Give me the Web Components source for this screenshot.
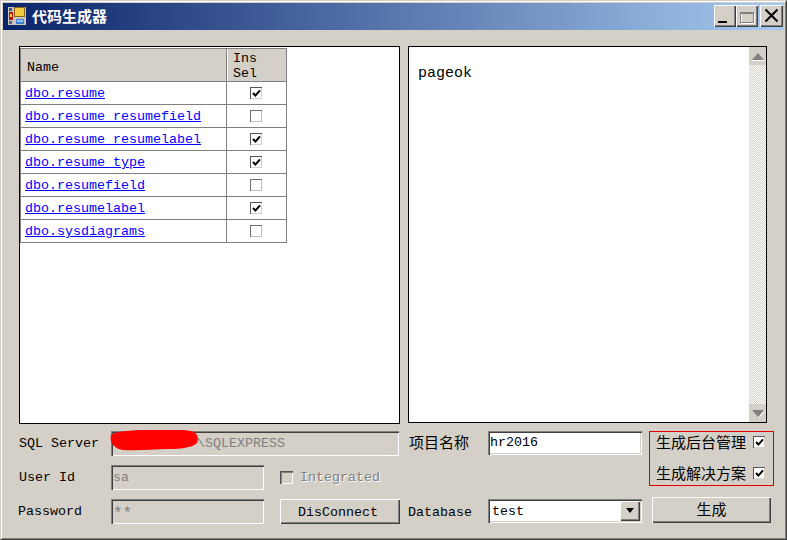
<!DOCTYPE html>
<html lang="zh"><head><meta charset="utf-8">
<style>
html,body{margin:0;padding:0;background:#d4d0c8}
body{width:787px;height:540px;overflow:hidden;font:13.33px "Liberation Mono","Noto Sans CJK SC",monospace;color:#000}
</style></head><body>
<win-frame caption="代码生成器">
  <main-panes>
    <table-list slot="left"></table-list>
    <text-log slot="right">pageok</text-log>
  </main-panes>
  <form-grid>
    <win-label style="grid-area:1/1">SQL Server</win-label>
    <sunken-field disabled value="\SQLEXPRESS" style="grid-area:1/2/1/5;padding-left:84px;margin-right:1px" mask></sunken-field>
    <win-label style="grid-area:2/1">User Id</win-label>
    <sunken-field disabled value="sa" style="grid-area:2/2"></sunken-field>
    <win-label style="grid-area:3/1;margin-left:-1px">Password</win-label>
    <sunken-field stars disabled value="**" style="grid-area:3/2"></sunken-field>
    <check-label disabled style="grid-area:2/4;align-self:center">Integrated</check-label>
    <win-button style="grid-area:3/4;padding:1px 4px 0 0">DisConnect</win-button>
    <win-label cjk style="grid-area:1/6;margin-left:1px;margin-top:-4px">项目名称</win-label>
    <sunken-field live value="hr2016" style="grid-area:1/7;height:24px;padding-bottom:2px"></sunken-field>
    <win-label style="grid-area:3/6;padding-top:1px">Database</win-label>
    <combo-box value="test" style="grid-area:3/7"></combo-box>
    <check-group style="grid-area:1/9/3/9">
      <group-check>生成后台管理</group-check>
      <group-check>生成解决方案</group-check>
    </check-group>
    <win-button cjk style="grid-area:3/9;margin:-2px 3px 1px 3px;padding-bottom:3px">生成</win-button>
  </form-grid>
</win-frame>
<script>
const el=(name,html,extra)=>customElements.define(name,class extends HTMLElement{
  constructor(){super();this.attachShadow({mode:'open'}).innerHTML=typeof html==='function'?html(this):html}
  connectedCallback(){if(extra)extra(this)}
});
const FONT='"Liberation Mono","Noto Sans CJK SC",monospace';
const CJK='"Noto Sans CJK SC","Liberation Mono",sans-serif';
const TICK='<svg width="9" height="9" viewBox="0 0 9 9" style="display:block"><path d="M1 4l2.4 2.6L8 1.4" fill="none" stroke="#000" stroke-width="2"/></svg>';

customElements.define('win-frame',class extends HTMLElement{
  connectedCallback(){
    if(this.shadowRoot)return;
    const c=this.getAttribute('caption');
    this.attachShadow({mode:'open'}).innerHTML=`<style>
    :host{display:block;box-sizing:border-box;width:787px;height:540px;background:#d4d0c8;border:1px solid;border-color:#d4d0c8 #404040 #404040 #d4d0c8}
    .in{box-sizing:border-box;height:100%;border:1px solid;border-color:#fff #808080 #808080 #fff;padding:1px;display:flex;flex-direction:column}
    .bar{height:27px;flex:none;display:flex;align-items:center;background:linear-gradient(90deg,#0a246a,#a6caf0);padding:0 1px 1px 5px;box-sizing:border-box}
    .t{color:#fff;font:bold 15px/20px ${CJK};margin-left:6px;margin-top:-1px}
    .ic{flex:none;display:block}
    .b{box-sizing:border-box;width:22px;height:22px;background:#d4d0c8;box-shadow:inset 1px 1px #fff,inset -1px -1px #404040,inset -2px -2px #808080;display:flex;align-items:center;justify-content:center;flex:none}
    .b svg{display:block}
    .min{margin-left:auto}.cl{margin-left:2px;width:23px}
    .body{flex:1;padding:16px 0 0 16px;display:flex;flex-direction:column;gap:7px}
    </style><div class="in"><div class="bar">
    <svg class="ic" width="18" height="18" viewBox="0 0 18 18"><rect width="18" height="18" fill="#c9c7c0"/><rect x="1" y="1" width="3" height="3" fill="#3d5a78"/><rect x="1" y="5" width="4" height="8" fill="#b8140c"/><rect x="2" y="7" width="2" height="3" fill="#f5d040"/><rect x="1" y="14" width="3" height="3" fill="#5a6a80"/><rect x="6" y="0" width="11" height="10" fill="#8a6414"/><rect x="7" y="1" width="9" height="8" fill="#f6c840"/><rect x="8" y="12" width="8" height="5" fill="#3f7ed8"/><rect x="9" y="13" width="6" height="2" fill="#9cc4f2"/></svg>
    <span class="t">${c}</span>
    <div class="b min"><svg width="22" height="22"><rect x="4" y="16" width="9" height="2" fill="#000"/></svg></div>
    <div class="b max"><svg width="22" height="22"><path d="M5.5 8.5h13v10h-13z" fill="none" stroke="#fff"/><path d="M4.5 7.5h13v10h-13zM4.5 8.5h13" fill="none" stroke="#808080"/></svg></div>
    <div class="b cl"><svg width="23" height="22"><path d="M5.5 4.5l12 12M17.5 4.5l-12 12" stroke="#000" stroke-width="2" fill="none"/></svg></div>
    </div><div class="body"><slot></slot></div></div>`;
  }
});

el('main-panes',`<style>:host{display:flex;gap:8px;height:378px;flex:none}
::slotted(*){flex:none}</style><slot name="left"></slot><slot name="right"></slot>`);

el('table-list',h=>`<style>
:host{display:block;box-sizing:border-box;width:381px;height:378px;background:#fff;border:1px solid #000;padding-top:1px;font:13.33px ${FONT}}
.t{display:grid;grid-template-columns:206px 60px;width:267px;border-top:1px solid #808080;border-left:1px solid #808080;box-sizing:border-box}
</style><div class="t" id="t"></div>`,h=>{
  const t=h.shadowRoot.getElementById('t');
  if(t.childElementCount)return;
  const rows=[['dbo.resume',1],['dbo.resume_resumefield',0],['dbo.resume_resumelabel',1],['dbo.resume_type',1],['dbo.resumefield',0],['dbo.resumelabel',1],['dbo.sysdiagrams',0]];
  t.innerHTML='<grid-head>Name</grid-head><grid-head two>Ins<br>Sel</grid-head>'+rows.map(r=>`<link-cell>${r[0]}</link-cell><tick-cell${r[1]?' checked':''}></tick-cell>`).join('');
});

el('grid-head',`<style>:host{display:flex;align-items:center;box-sizing:border-box;height:33px;background:#d4d0c8;border-right:1px solid #808080;border-bottom:1px solid #808080;padding:5px 0 0 6px;line-height:15px}
:host([two]){padding:1px 0 0 6px;box-shadow:inset 1px 0 #fff}</style><div><slot></slot></div>`);

el('link-cell',`<style>:host{display:flex;align-items:center;box-sizing:border-box;height:23px;background:#fff;border-right:1px solid #808080;border-bottom:1px solid #808080;padding:1px 0 0 4px;color:#00f;text-decoration:underline;white-space:nowrap}</style><slot></slot>`);

el('tick-cell',h=>`<style>:host{display:flex;align-items:center;justify-content:center;box-sizing:border-box;height:23px;background:#fff;border-right:1px solid #808080;border-bottom:1px solid #808080;padding-right:1px}</style><check-box ${h.hasAttribute('checked')?'checked':'light'}></check-box>`);

el('check-box',h=>`<style>:host{display:flex;align-items:center;justify-content:center;box-sizing:border-box;width:12px;height:12px;background:#fff;flex:none;box-shadow:inset 1px 1px #555,inset -1px -1px #d4d0c8}
:host([light]){box-shadow:inset 1px 1px #707070,inset -1px -1px #bdbdb8}
:host([off]){background:#d4d0c8;box-shadow:inset 1px 1px #555,inset 2px 2px #808080,inset -1px -1px #fff;width:13px;height:13px}</style>${h.hasAttribute('checked')?TICK:''}`);

el('text-log',`<style>:host{display:flex;box-sizing:border-box;width:359px;height:377px;background:#fff;border:1px solid #000;font:15px/1 ${FONT}}
.txt{flex:1;padding:19px 0 0 9px}
.sb{width:17px;display:flex;flex-direction:column;background:repeating-conic-gradient(#d4d0c8 0 25%,#fff 0 50%) 0 0/2px 2px}
.a{height:18px;background:#d4d0c8;flex:none;display:flex;align-items:center;justify-content:center}
.m{flex:1}</style><div class="txt"><slot></slot></div><div class="sb">
<div class="a"><svg width="14" height="9"><path d="M1 8L7 1l6 7z" fill="#808080"/><path d="M1 8.5h12" stroke="#fff"/></svg></div>
<div class="m"></div>
<div class="a"><svg width="14" height="9"><path d="M1 1h12L7 8z" fill="#808080"/><path d="M8 8.5l6-7" stroke="#fff"/></svg></div></div>`);

el('form-grid',`<style>:host{display:grid;grid-template-columns:92px 153px 16px 120px 8px 80px 154px 7px 125px;grid-template-rows:25px 25px 25px;row-gap:9px;flex:none}</style><slot></slot>`);

el('win-label',h=>`<style>:host{display:flex;align-items:center;white-space:nowrap}
:host([cjk]){font:15px ${CJK}}</style><slot></slot>`);

el('sunken-field',h=>{
  const live=h.hasAttribute('live');
  const mask=h.hasAttribute('mask');
  return `<style>:host{display:flex;align-items:center;box-sizing:border-box;position:relative;background:${live?'#fff':'#d4d0c8'};color:${live?'#000':'#808080'};box-shadow:inset 1px 1px #808080,inset 2px 2px #404040,inset -1px -1px #fff,inset -2px -2px #d4d0c8}
  span{padding-left:2px}
  :host([stars]) span{font-size:16px;padding:4px 0 0 2px;margin-left:0}
  svg{position:absolute;left:-1px;top:-1px}</style>${mask?'<svg width="90" height="24" viewBox="0 0 90 24"><path d="M1 5C6 1 16 1 30 0c20-1 40-1 51 1 7 2 8 7 6 12-4 4-14 6-29 6-14 0-30 2-45 1C5 19-1 13 1 5z" fill="#f00"/></svg>':''}<span>${h.getAttribute('value')}</span>`;
});

el('check-label',h=>`<style>:host{display:flex;align-items:center;gap:7px;color:#808080;text-shadow:1px 1px #fff;white-space:nowrap}</style><check-box off></check-box><span><slot></slot></span>`);

el('win-button',`<style>:host{display:flex;align-items:center;justify-content:center;box-sizing:border-box;background:#d4d0c8;box-shadow:inset 1px 1px #fff,inset -1px -1px #404040,inset -2px -2px #808080;white-space:nowrap}
:host([cjk]){font:15px ${CJK}}</style><slot></slot>`);

el('combo-box',h=>`<style>:host{display:flex;align-items:center;box-sizing:border-box;height:24px;background:#fff;padding:2px;box-shadow:inset 1px 1px #808080,inset 2px 2px #404040,inset -1px -1px #fff,inset -2px -2px #d4d0c8}
span{flex:1;padding-left:2px}
.b{box-sizing:border-box;width:20px;height:20px;background:#d4d0c8;box-shadow:inset 1px 1px #fff,inset -1px -1px #404040,inset -2px -2px #808080;display:flex;align-items:center;justify-content:center}</style><span>${h.getAttribute('value')}</span><div class="b"><svg width="10" height="6"><path d="M1 0h8L5 5z" fill="#000"/></svg></div>`);

el('check-group',`<style>:host{display:flex;flex-direction:column;gap:11px;box-sizing:border-box;height:55px;border:1px solid #e00000;padding:0 8px 0 6px}</style><slot></slot>`);

el('group-check',`<style>:host{display:flex;align-items:center;justify-content:space-between;height:20px;font:15px/20px ${CJK};white-space:nowrap}</style><span><slot></slot></span><check-box checked></check-box>`);
</script>
</body></html>
